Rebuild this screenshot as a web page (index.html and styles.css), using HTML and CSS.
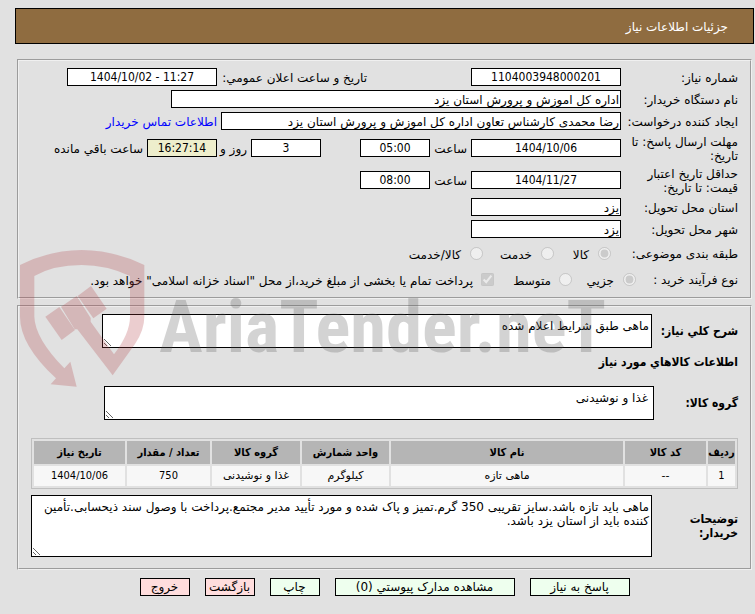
FILE: index.html
```html
<!DOCTYPE html>
<html lang="fa" dir="rtl">
<head>
<meta charset="utf-8">
<title>جزئیات اطلاعات نیاز</title>
<link rel="stylesheet" href="styles.css">
</head>
<body>
<header class="title-bar"><h1>جزئیات اطلاعات نیاز</h1></header>
<main>
<fieldset class="panel info">
  <div class="row">
    <label class="name" for="number">شماره نیاز:</label>
    <input class="field center w150" id="number" value="1104003948000201" readonly>
    <label class="announce" for="announced">تاریخ و ساعت اعلان عمومي:</label>
    <input class="field center w150" id="announced" dir="ltr" value="1404/10/02 - 11:27" readonly>
  </div>
  <div class="row">
    <label class="name" for="org">نام دستگاه خریدار:</label>
    <input class="field w450" id="org" value="اداره کل اموزش و پرورش استان یزد" readonly>
  </div>
  <div class="row">
    <label class="name" for="creator">ایجاد کننده درخواست:</label>
    <input class="field w400" id="creator" value="رضا محمدی کارشناس تعاون اداره کل اموزش و پرورش استان یزد" readonly>
    <a class="contact" href="#contact">اطلاعات تماس خریدار</a>
  </div>
  <div class="row tall">
    <label class="name" for="deadline">مهلت ارسال پاسخ: تا<br>تاریخ:</label>
    <input class="field center w150" id="deadline" value="1404/10/06" readonly>
    <label class="hour" for="deadline-hour">ساعت</label>
    <input class="field center w70" id="deadline-hour" value="05:00" readonly>
    <input class="field center w70 days" id="days" aria-label="روز" value="3" readonly>
    <label class="day-and" for="days">روز و</label>
    <input class="field center w70 countdown" id="left" value="16:27:14" readonly>
    <label class="remaining" for="left">ساعت باقي مانده</label>
  </div>
  <div class="row tall">
    <label class="name" for="valid">حداقل تاریخ اعتبار<br>قیمت: تا تاریخ:</label>
    <input class="field center w150" id="valid" value="1404/11/27" readonly>
    <label class="hour" for="valid-hour">ساعت</label>
    <input class="field center w70" id="valid-hour" value="08:00" readonly>
  </div>
  <div class="row">
    <label class="name" for="province">استان محل تحویل:</label>
    <input class="field w150" id="province" value="یزد" readonly>
  </div>
  <div class="row">
    <label class="name" for="city">شهر محل تحویل:</label>
    <input class="field w150" id="city" value="یزد" readonly>
  </div>
  <div class="row choices kinds">
    <span class="name">طبقه بندی موضوعی:</span>
    <label><input type="radio" name="kind" checked disabled><span>کالا</span></label>
    <label><input type="radio" name="kind" disabled><span>خدمت</span></label>
    <label><input type="radio" name="kind" disabled><span>کالا/خدمت</span></label>
  </div>
  <div class="row choices process">
    <span class="name">نوع فرآیند خرید :</span>
    <label><input type="radio" name="process" checked disabled><span>جزيي</span></label>
    <label><input type="radio" name="process" disabled><span>متوسط</span></label>
    <label><input type="checkbox" checked disabled><span>پرداخت تمام یا بخشی از مبلغ خرید،از محل "اسناد خزانه اسلامی" خواهد بود.</span></label>
  </div>
</fieldset>

<fieldset class="panel goods">
  <div class="block">
    <label class="strong" for="summary">شرح کلي نیاز:</label>
    <textarea class="area short" id="summary" readonly>ماهی طبق شرایط اعلام شده</textarea>
  </div>
  <h2>اطلاعات کالاهاي مورد نیاز</h2>
  <div class="block group">
    <label class="strong" for="group">گروه کالا:</label>
    <textarea class="area short" id="group" readonly>غذا و نوشیدنی</textarea>
  </div>
  <table>
    <colgroup><col class="c-row"><col class="c-code"><col><col class="c-unit"><col class="c-group"><col class="c-count"><col class="c-date"></colgroup>
    <thead><tr><th>ردیف</th><th>کد کالا</th><th>نام کالا</th><th>واحد شمارش</th><th>گروه کالا</th><th>تعداد / مقدار</th><th>تاریخ نیاز</th></tr></thead>
    <tbody><tr><td class="num">1</td><td>--</td><td>ماهی تازه</td><td>کیلوگرم</td><td>غذا و نوشیدنی</td><td class="num">750</td><td class="num">1404/10/06</td></tr></tbody>
  </table>
  <div class="block notes">
    <label class="strong" for="notes">توضیحات<br>خریدار:</label>
    <textarea class="area long" id="notes" readonly>ماهی باید تازه باشد.سایز تقریبی 350 گرم.تمیز و پاک شده و مورد تأیید مدیر مجتمع.پرداخت با وصول سند ذیحسابی.تأمین کننده باید از استان یزد باشد.</textarea>
  </div>
</fieldset>

<svg class="watermark" viewBox="60 90 1770 450" aria-hidden="true">
  <g class="shield">
    <path d="M60 165Q150 120 245 120Q340 120 433 165V320Q433 360 405 402L338 496L232 358L224 358L183 290L230 258L272 324V335L342 433Q390 370 390 320V198Q320 165 245 165Q160 165 103 198V320Q105 385 193 475L211 455L230 530L152 523L168 505Q60 405 60 320Z"/>
    <path d="M136 320L178 291L225 360L185 390Z"/>
    <path d="M233 258L273 228L320 296L280 325Z"/>
  </g>
  <text x="478" y="425">AriaTender.neT</text>
</svg>
</main>

<footer class="actions">
  <button class="btn go wide" type="button">پاسخ به نیاز</button>
  <button class="btn go widest" type="button">مشاهده مدارک پیوستي (0)</button>
  <button class="btn go" type="button">چاپ</button>
  <button class="btn leave" type="button">بازگشت</button>
  <button class="btn leave" type="button">خروج</button>
</footer>
</body>
</html>
```
FILE: styles.css
```css
* { box-sizing: border-box; }
body {
  margin: 0;
  padding: 8px 1px 8px 15px;
  background: #e1e1e1;
  color: #000;
  font: 12px/14px "DejaVu Sans", sans-serif;
}
input, textarea, button { font: inherit; color: inherit; }

.title-bar {
  display: flex;
  align-items: center;
  height: 36px;
  padding: 2px 25px 0;
  background: #8f6c40;
  border: 1px solid #000;
  color: #fff;
}
h1 { margin: 0; font-size: 12px; font-weight: normal; }
main { position: relative; padding: 15px 2px 0; }

.panel {
  margin: 0;
  min-width: 0;
  border: 2px groove #f0f0f0;
}
.info { padding: 5px 12px; }
.goods { margin-top: 6px; padding: 7px 12px 11px; }

.row { display: flex; align-items: center; min-height: 22px; white-space: nowrap; }
.tall { min-height: 32px; }
.name { flex: 0 0 117px; }
.name, .announce, .contact, .hour, .day-and, .remaining { padding-top: 2px; }
.field {
  height: 18px;
  margin: 0;
  padding: 1px 1px 0;
  border: 1px solid #000;
  border-radius: 0;
  background: #fff;
}
.center { padding: 0; text-align: center; }
.center, .num, h2, .strong, th { font-family: "DejaVu Sans Condensed", "DejaVu Sans", sans-serif; }
.w70 { width: 70px; }
.w150 { width: 150px; }
.w400 { width: 400px; }
.w450 { width: 450px; }
.announce { width: 254px; padding-right: 104px; }
.contact { padding-right: 4px; color: #00f; text-decoration: none; }
.hour { width: 41px; padding-right: 4px; }
.days { margin-right: 39px; }
.day-and { width: 34px; padding-right: 4px; }
.countdown { background: #eeeecc; }
.remaining { padding-right: 4px; }

.choices { min-height: 26px; }
.choices label { display: flex; align-items: center; gap: 9px; }
.choices label span { padding-top: 4px; }
.choices input { flex: none; width: 13px; height: 13px; margin: 0; }
.kinds .name { flex-basis: 127px; }
.kinds label { width: 57px; }
.kinds label + label { width: 71px; }
.process .name { flex-basis: 102px; }
.process label { width: 64px; }
.process label + label { gap: 8px; width: 78px; }
.process label:last-child { width: auto; }

.block { display: flex; align-items: center; }
.strong { flex: 0 0 86px; font-weight: bold; white-space: nowrap; }
.area {
  display: block;
  margin: 0;
  padding: 4px 2px;
  border: 1px solid #000;
  border-radius: 0;
  background: #fff;
  overflow: hidden;
}
.short { width: 550px; height: 34px; }
h2 { margin: 7px 0 17px; font-size: 12px; line-height: 14px; }
.group .strong { flex-basis: 84px; }
.group .area { padding-right: 5px; }
.long { flex: 1; height: 62px; }
.notes { margin-top: 6px; }

table {
  width: 100%;
  margin-top: 18px;
  table-layout: fixed;
  border: 1px solid #bfbfbf;
  border-collapse: separate;
  border-spacing: 2px;
  font-size: 11px;
  text-align: center;
}
th, td { padding: 0; white-space: nowrap; }
th { height: 23px; background: #b5b5b5; }
td { height: 20px; background: #f7f7f7; }
.c-row { width: 27px; }
.c-code { width: 81px; }
.c-unit { width: 87px; }
.c-group { width: 88px; }
.c-count { width: 83px; }
.c-date { width: 91px; }

.watermark {
  position: absolute;
  left: 5px;
  top: 196px;
  width: 590px;
  height: 150px;
  pointer-events: none;
}
.shield { fill: rgb(177, 61, 66); opacity: 0.25; }
.watermark text {
  direction: ltr;
  fill: rgb(85, 85, 85);
  opacity: 0.25;
  font: bold 218px "Roboto Condensed", Roboto, sans-serif;
}

.actions { display: flex; justify-content: center; gap: 15px; padding-top: 8px; }
.btn {
  width: 50px;
  height: 18px;
  padding: 0;
  border: 1px solid #000;
  border-radius: 0;
  white-space: nowrap;
}
.wide { width: 100px; }
.widest { width: 180px; }
.go { background: #eeffee; }
.leave { background: #ffdddd; }
```
